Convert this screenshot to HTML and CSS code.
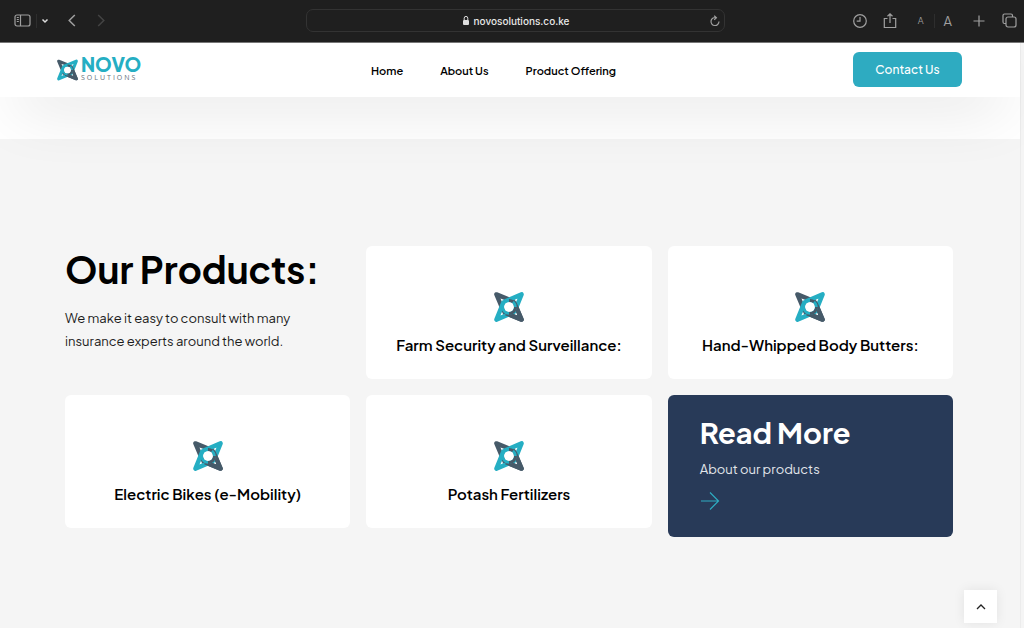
FILE: index.html
```html
<!DOCTYPE html>
<html lang="en">
<head>
<meta charset="utf-8">
<meta name="viewport" content="width=device-width, initial-scale=1">
<title>Novo Solutions</title>
<link rel="stylesheet" href="styles.css">
</head>
<body>
<svg class="symbols" aria-hidden="true">
  <symbol id="mark" viewBox="0 0 30 30">
    <g fill="none" stroke-width="4.4" stroke-linejoin="round" stroke-linecap="round">
      <path stroke="#465a69" d="M2.4 2.4 20 9.5 27.6 27.6 10 20.5Z"/>
      <path stroke="#25aec3" d="M27.6 2.4 20.5 20 2.4 27.6 9.5 10Z"/>
      <path stroke="#465a69" stroke-linecap="butt" d="M20.5 11 27.6 27.6 12 21.3"/>
    </g>
    <circle cx="15" cy="15" r="6.3" fill="none" stroke="#25aec3" stroke-width="3"/>
    <path d="M15 21.500A6.500 6.500 0 0 0 21.500 15" fill="none" stroke="#465a69" stroke-width="3"/>
    <path d="M15 8.500A6.500 6.500 0 0 1 19 9.800" fill="none" stroke="#465a69" stroke-width="3"/>
    <circle cx="15" cy="15" r="4.8" fill="#fff"/>
    <g fill="#c5dfe4"><circle cx="8.3" cy="21.4" r=".8"/><circle cx="21.6" cy="8.5" r=".8"/><circle cx="8.5" cy="8" r=".8"/><circle cx="21.8" cy="21.7" r=".8"/></g>
  </symbol>
</svg>

<div class="browser">
  <div class="tools tools-left">
    <button class="tool" aria-label="Sidebar"><svg width="18" height="14" viewBox="0 0 18 14"><rect x="1" y="1" width="15" height="11" rx="2"/><path d="M6.5 1v11M2.8 3.5h2M2.8 5.5h2M2.8 7.5h2"/></svg></button>
    <span class="rule"></span>
    <button class="tool chevron" aria-label="Tab groups"><svg width="8" height="6" viewBox="0 0 8 6"><path d="m1.5 1.5 2.5 2.5 2.5-2.5"/></svg></button>
    <button class="tool back" aria-label="Back"><svg width="8" height="13" viewBox="0 0 8 13"><path d="M6.8 1 1.2 6.5l5.6 5.5"/></svg></button>
    <button class="tool forward" aria-label="Forward" disabled><svg width="8" height="13" viewBox="0 0 8 13"><path d="m1.2 1 5.6 5.5L1.2 12"/></svg></button>
  </div>
  <div class="address">
    <svg class="lock" width="8" height="11" viewBox="0 0 8 11" aria-hidden="true"><rect x="1" y="5" width="6" height="5" rx="1"/><path d="M2.2 5V3.2a1.8 1.8 0 0 1 3.6 0V5"/></svg>
    <span>novosolutions.co.ke</span>
    <button class="tool reload" aria-label="Reload"><svg width="10" height="12" viewBox="0 0 10 12"><path d="M5.8 2.6A4 4 0 1 0 9 6.6M4.2.7l2.2 2-2.2 2"/></svg></button>
  </div>
  <div class="tools tools-right">
    <button class="tool" aria-label="History"><svg width="14" height="14" viewBox="0 0 14 14"><circle cx="7" cy="7" r="6.3"/><path d="M7 3v4.2H3.7"/></svg></button>
    <button class="tool share" aria-label="Share"><svg width="14" height="16" viewBox="0 0 14 16"><path d="M4.5 5.5H1.3v9h11.4v-9H9.500M7 10V1M4.500 3.300 7 .9l2.500 2.400"/></svg></button>
    <button class="tool text-small" aria-label="Smaller text">A</button>
    <span class="rule"></span>
    <button class="tool text-large" aria-label="Larger text">A</button>
    <button class="tool plus" aria-label="New tab"><svg width="12" height="12" viewBox="0 0 12 12"><path d="M6 .5v11M.5 6h11"/></svg></button>
    <button class="tool tabs" aria-label="Show tabs"><svg width="15" height="15" viewBox="0 0 15 15"><rect x="4" y="4" width="10" height="10" rx="2"/><path d="M4 10.500H2.500A1.500 1.500 0 0 1 1 9V2.500A1.500 1.500 0 0 1 2.500 1H9a1.500 1.500 0 0 1 1.500 1.500V4"/></svg></button>
  </div>
</div>

<div class="page">
  <header class="header">
    <a class="logo" href="#"><svg width="21" height="22" aria-hidden="true"><use href="#mark"/></svg><span class="logo-text"><strong>NOVO</strong><small>SOLUTIONS</small></span></a>
    <nav class="nav">
      <a href="#">Home</a>
      <a href="#">About Us</a>
      <a href="#">Product Offering</a>
    </nav>
    <button class="contact">Contact Us</button>
  </header>
  <div class="strip"></div>

  <main class="products">
    <div class="grid">
      <div class="intro">
        <h1>Our Products:</h1>
        <p>We make it easy to consult with many insurance experts around the world.</p>
      </div>
      <article class="card"><svg width="30" height="30" aria-hidden="true"><use href="#mark"/></svg><h2>Farm Security and Surveillance:</h2></article>
      <article class="card"><svg width="30" height="30" aria-hidden="true"><use href="#mark"/></svg><h2>Hand-Whipped Body Butters:</h2></article>
      <article class="card"><svg width="30" height="30" aria-hidden="true"><use href="#mark"/></svg><h2>Electric Bikes (e-Mobility)</h2></article>
      <article class="card"><svg width="30" height="30" aria-hidden="true"><use href="#mark"/></svg><h2>Potash Fertilizers</h2></article>
      <article class="more">
        <h2>Read More</h2>
        <p>About our products</p>
        <a href="#" aria-label="About our products"><svg width="20" height="20" viewBox="0 0 20 20"><path d="M1 10h17M10 1.500 18.500 10 10 18.500"/></svg></a>
      </article>
    </div>
  </main>
</div>
<button class="to-top" aria-label="Back to top"><svg width="10" height="6" viewBox="0 0 10 6"><path d="m1 5 4-4 4 4"/></svg></button>
</body>
</html>
```
FILE: styles.css
```css
* { box-sizing: border-box; }

body {
  margin: 0;
  min-height: 100vh;
  display: flex;
  flex-direction: column;
  font-family: "Plus Jakarta Sans", Inter, sans-serif;
  color: #000;
  background: #f5f5f5;
}

button { padding: 0; border: 0; font: inherit; background: none; cursor: pointer; }
h1, h2, p { margin: 0; }
a { color: inherit; text-decoration: none; }
svg { display: block; }
.symbols { position: absolute; width: 0; height: 0; }

.browser {
  position: relative;
  z-index: 2;
  display: grid;
  grid-template-columns: 1fr minmax(0, 419px) 1fr;
  align-items: center;
  height: 43px;
  padding: 0 7px 1px 14px;
  background: #1f1f1f;
  border-bottom: 1px solid #777;
}
.tools { display: flex; align-items: center; }
.tools-right { justify-content: flex-end; }
.tool { color: #a0a0a0; }
.tool svg { fill: none; stroke: currentColor; stroke-width: 1.2; }
.rule { width: 1px; height: 14px; background: #2e2e2e; }
.tools-left .rule { margin: 0 4px; }
.chevron { color: #ddd; }
.chevron svg { stroke-width: 1.5; }
.back { margin-left: 19px; }
.back svg, .forward svg { stroke-width: 1.5; }
.forward { margin-left: 21px; color: #444; }
.address {
  display: flex;
  align-items: center;
  justify-content: center;
  gap: 4px;
  height: 23px;
  position: relative;
  border: 1px solid #333;
  border-radius: 7px;
  color: #e8e8e8;
  font: 500 10px Inter, sans-serif;
}
.lock rect { fill: #ddd; }
.lock path { fill: none; stroke: #ddd; }
.reload { position: absolute; right: 4px; }
.share { margin-left: 16px; }
.text-small { margin-left: 21px; font-size: 9px; }
.tools-right .rule { margin: 0 9px 0 10px; }
.text-large { font-size: 13px; }
.plus { margin-left: 21px; }
.tabs { margin-left: 17px; }

.page {
  flex: 1;
  display: flex;
  flex-direction: column;
  margin-right: 3px;
  border-right: 1px solid #ececec;
}

.header {
  position: relative;
  display: grid;
  grid-template-columns: 1fr auto 1fr;
  align-items: center;
  height: 54px;
  padding: 0 58px 1px 57px;
  background: #fff;
  box-shadow: 0 20px 64px -16px rgba(0, 0, 0, .2);
}
.strip { height: 42px; background: #fff; }
.logo { display: flex; align-items: center; gap: 3px; }
.logo-text { display: flex; flex-direction: column; gap: 2px; }
.logo strong { font-size: 19px; line-height: 15px; font-weight: 800; color: #25aec3; }
.logo small { font-size: 7px; line-height: 8px; letter-spacing: 2px; color: #65717a; font-family: "Open Sans", sans-serif; }
.nav { display: flex; gap: 37px; margin-right: 32px; padding-top: 2px; font-size: 11px; font-weight: 600; }
.contact {
  justify-self: end;
  width: 109px;
  height: 35px;
  border-radius: 6px;
  background: #2eabc1;
  color: #fff;
  font-size: 12px;
  font-weight: 500;
}

.products { flex: 1; padding: 107px 67px 91px 65px; }
.grid {
  display: grid;
  grid-template-columns: repeat(3, minmax(0, 1fr));
  gap: 16px;
  align-items: start;
}
.intro h1 { font-size: 37px; line-height: 46px; font-weight: 700; white-space: nowrap; }
.intro p { margin-top: 15px; max-width: 240px; font-size: 13px; line-height: 23px; color: #1c1c1c; }
.card {
  display: flex;
  flex-direction: column;
  align-items: center;
  gap: 11px;
  padding: 46px 16px 22px;
  border-radius: 6px;
  background: #fff;
}
.card h2 { font-size: 15px; line-height: 24px; font-weight: 600; white-space: nowrap; }
.more {
  padding: 19px 32px 26px;
  border-radius: 6px;
  background: #283a58;
  color: #fff;
}
.more h2 { font-size: 29px; line-height: 36px; font-weight: 700; }
.more p { margin-top: 8px; font-size: 13px; line-height: 22px; color: #e3e6eb; }
.more a { display: block; width: 20px; margin-top: 11px; }
.more svg { fill: none; stroke: #2eabc1; stroke-width: 1.2; }

.to-top {
  position: fixed;
  right: 27px;
  bottom: 5px;
  display: grid;
  place-items: center;
  width: 33px;
  height: 33px;
  background: #fff;
  box-shadow: 0 0 12px rgba(0, 0, 0, .08);
}
.to-top svg { fill: none; stroke: #222; stroke-width: 1.3; }
```
